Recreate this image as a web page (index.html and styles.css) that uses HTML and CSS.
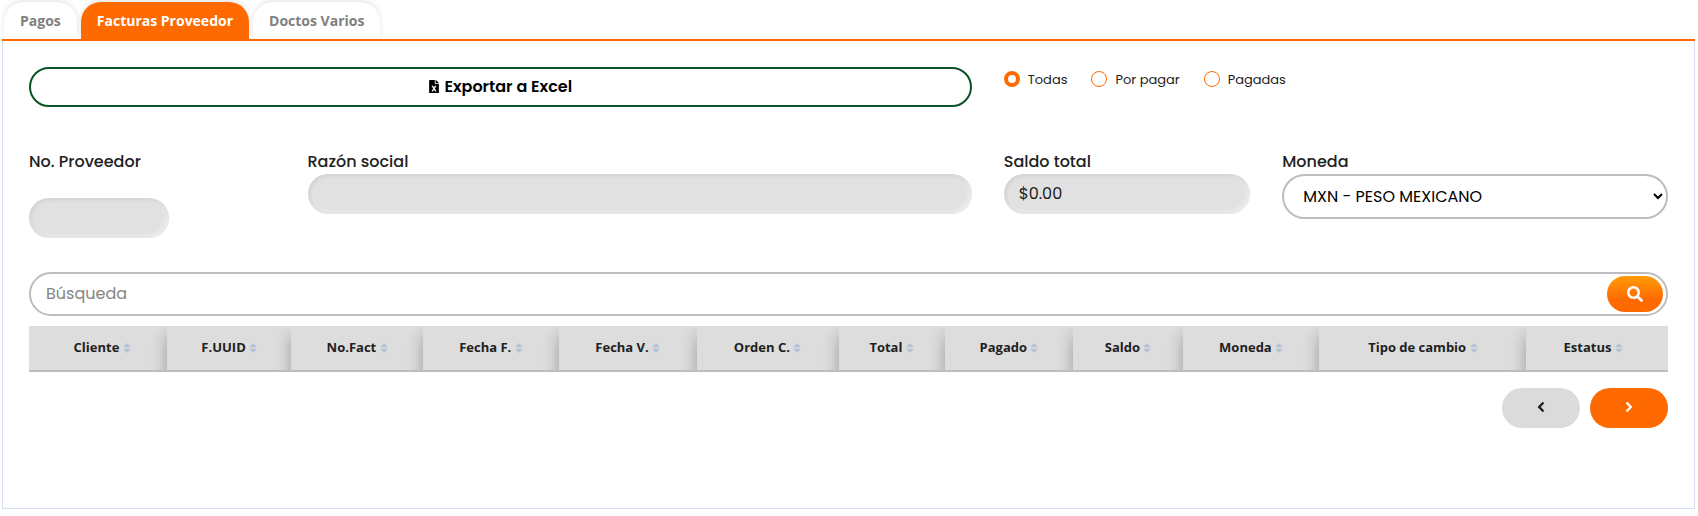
FILE: index.html
```html
<!DOCTYPE html>
<html lang="es">
<head>
    <meta charset="UTF-8">
    <meta name="viewport" content="width=device-width, initial-scale=1.0">
    <title>Facturas Proveedor</title>
    <link rel="stylesheet" href="styles.css">
</head>
<body>
    <svg class="sprite" aria-hidden="true">
        <symbol id="sort" viewBox="0 0 8 10">
            <path d="M4 0l3.800 4H.2zM4 10L.2 6h7.600z"/>
            <path d="M1 4h6v2H1z" opacity=".25"/>
        </symbol>
    </svg>
    <nav class="tabs">
        <a href="#pagos" class="tab">Pagos</a>
        <a href="#facturas" class="tab active">Facturas Proveedor</a>
        <a href="#doctos" class="tab">Doctos Varios</a>
    </nav>
    <main class="panel" id="facturas">
        <div class="row">
            <button type="button" class="btn-excel">
                <svg width="10" height="13" viewBox="0 0 384 512"><path fill="currentColor" d="M224 136V0H24C10.700 0 0 10.700 0 24v464c0 13.300 10.700 24 24 24h336c13.300 0 24-10.700 24-24V160H248c-13.200 0-24-10.800-24-24zm60.100 106.500L224 336l60.100 93.500c5.100 8-.6 18.500-10.100 18.500h-34.900c-4.400 0-8.500-2.400-10.600-6.300C208.900 405.500 192 373 192 373c-6.400 14.800-10 20-36.600 68.800-2.100 3.900-6.100 6.300-10.500 6.300H110c-9.500 0-15.200-10.500-10.100-18.500l60.300-93.500-60.300-93.500c-5.200-8 .6-18.500 10.100-18.500h34.800c4.400 0 8.500 2.400 10.600 6.300 26.100 48.800 20 33.600 36.600 68.500 0 0 6.100-11.700 36.600-68.500 2.100-3.900 6.200-6.300 10.600-6.300H274c9.500-.1 15.200 10.400 10.100 18.400zM384 121.900v6.100H256V0h6.100c6.400 0 12.500 2.500 17 7l97.900 98c4.500 4.500 7 10.600 7 16.900z"/></svg>
                Exportar a Excel
            </button>
            <div class="radios">
                <label><input type="radio" name="estado" checked> Todas</label>
                <label><input type="radio" name="estado"> Por pagar</label>
                <label><input type="radio" name="estado"> Pagadas</label>
            </div>
        </div>
        <div class="row fields">
            <div class="field proveedor">
                <label for="proveedor">No. Proveedor</label>
                <input type="text" id="proveedor" readonly>
            </div>
            <div class="field razon">
                <label for="razon">Razón social</label>
                <input type="text" id="razon" readonly>
            </div>
            <div class="field saldo">
                <label for="saldo">Saldo total</label>
                <input type="text" id="saldo" value="$0.00" readonly>
            </div>
            <div class="field moneda">
                <label for="moneda">Moneda</label>
                <select id="moneda">
                    <option>MXN - PESO MEXICANO</option>
                </select>
            </div>
        </div>
        <form class="search">
            <input type="text" placeholder="Búsqueda" aria-label="Búsqueda">
            <button type="button" aria-label="Buscar">
                <svg width="16" height="16" viewBox="0 0 512 512"><path fill="currentColor" d="M505 442.700L405.300 343c-4.500-4.500-10.600-7-17-7H372c27.600-35.300 44-79.700 44-128C416 93.100 322.900 0 208 0S0 93.100 0 208s93.100 208 208 208c48.300 0 92.700-16.400 128-44v16.300c0 6.400 2.500 12.500 7 17l99.700 99.700c9.400 9.400 24.600 9.400 33.900 0l28.300-28.300c9.400-9.400 9.400-24.600.1-34zM208 336c-70.700 0-128-57.200-128-128 0-70.700 57.200-128 128-128 70.700 0 128 57.200 128 128 0 70.700-57.200 128-128 128z"/></svg>
            </button>
        </form>
        <div class="table-wrap">
            <table>
                <thead>
                    <tr>
                        <th>Cliente <svg><use href="#sort"/></svg></th>
                        <th>F.UUID <svg><use href="#sort"/></svg></th>
                        <th>No.Fact <svg><use href="#sort"/></svg></th>
                        <th>Fecha F. <svg><use href="#sort"/></svg></th>
                        <th>Fecha V. <svg><use href="#sort"/></svg></th>
                        <th>Orden C. <svg><use href="#sort"/></svg></th>
                        <th>Total <svg><use href="#sort"/></svg></th>
                        <th>Pagado <svg><use href="#sort"/></svg></th>
                        <th>Saldo <svg><use href="#sort"/></svg></th>
                        <th>Moneda <svg><use href="#sort"/></svg></th>
                        <th>Tipo de cambio <svg><use href="#sort"/></svg></th>
                        <th>Estatus <svg><use href="#sort"/></svg></th>
                    </tr>
                </thead>
            </table>
        </div>
        <div class="pager">
            <button type="button" class="prev" aria-label="Anterior">
                <svg width="8" height="12" viewBox="0 0 8 12"><path d="M6.500 1.500L2.200 6l4.300 4.500"/></svg>
            </button>
            <button type="button" class="next" aria-label="Siguiente">
                <svg width="8" height="12" viewBox="0 0 8 12"><path d="M1.500 1.500L5.800 6l-4.300 4.500"/></svg>
            </button>
        </div>
    </main>
</body>
</html>
```
FILE: styles.css
```css
* {
    box-sizing: border-box;
}
body {
    margin: 0;
    padding: 2px 3px 8px 2px;
    background-color: #fff;
    color: #212121;
    font-family: Poppins, Inter, sans-serif;
    font-size: 16px;
    line-height: 24px;
}
button,
input,
select {
    font: inherit;
    margin: 0;
}
.sprite {
    display: none;
}
.tabs {
    display: flex;
    gap: 4px;
    padding-left: 2px;
    border-bottom: 2px solid #ff6a00;
}
.tab {
    height: 37px;
    padding: 0 16px;
    border-radius: 20px 20px 0 0;
    box-shadow: 0 -2px 5px rgba(0, 0, 0, 0.1);
    color: #808080;
    font: bold 14px/37px "Open Sans", sans-serif;
    text-decoration: none;
}
.tab.active {
    background-color: #ff6a00;
    color: #fff;
}
.panel {
    min-height: 468px;
    padding: 26px;
    border: 1px solid #d5deed;
    border-top: none;
}
.row {
    display: grid;
    grid-template-columns: repeat(12, 1fr);
    column-gap: 32px;
}
.btn-excel {
    grid-column: span 7;
    height: 40px;
    border: 2px solid #0b5226;
    border-radius: 20px;
    background-color: #fff;
    color: #000;
    font-weight: 600;
    cursor: pointer;
}
.btn-excel svg {
    margin-right: 2px;
    vertical-align: -1px;
}
.radios {
    grid-column: span 5;
    display: flex;
    gap: 24px;
    font-size: 13px;
}
.radios label {
    display: flex;
    align-items: center;
    gap: 8px;
    height: 26px;
}
.radios input {
    appearance: none;
    width: 16px;
    height: 16px;
    margin-bottom: 2px;
    border: 1px solid #ff6a00;
    border-radius: 50%;
}
.radios input:checked {
    border-width: 4px;
}
.fields {
    margin-top: 42px;
}
.field {
    display: flex;
    flex-direction: column;
}
.field label {
    height: 25px;
    padding-top: 1px;
    font-weight: 500;
}
.field input {
    width: 100%;
    height: 40px;
    padding: 0 15px 2px;
    border: none;
    border-radius: 20px;
    background-color: #e1e1e1;
    color: #212121;
    box-shadow: inset 1px 1px 5px rgba(0, 0, 0, 0.1), inset -2px -2px 5px rgba(255, 255, 255, 0.6);
}
.field select {
    height: 45px;
    padding: 0 15px;
    border: 2px solid #bdbdbd;
    border-radius: 23px;
    background-color: #fff;
    color: #000;
}
.proveedor,
.saldo {
    grid-column: span 2;
}
.proveedor input {
    width: 140px;
    margin-top: 24px;
}
.razon {
    grid-column: span 5;
}
.moneda {
    grid-column: span 3;
}
.search {
    display: flex;
    align-items: center;
    height: 44px;
    margin-top: 34px;
    padding-right: 3px;
    border: 2px solid #bdbdbd;
    border-radius: 22px;
}
.search input {
    flex: 1;
    padding: 0 15px;
    border: none;
    outline: none;
    background: none;
}
.search input::placeholder {
    color: #858585;
}
.search button {
    display: flex;
    align-items: center;
    justify-content: center;
    width: 56px;
    height: 36px;
    border: none;
    border-radius: 18px;
    background: linear-gradient(#ff9d0a, #ff6a00 65%);
    color: #fff;
    cursor: pointer;
}
.table-wrap {
    margin-top: 10px;
    overflow: hidden;
    border-bottom: 2px solid #bdbdbd;
}
table {
    width: 100%;
    border-spacing: 0;
    font: bold 13px/20px "Open Sans", sans-serif;
}
th {
    height: 44px;
    padding: 0 12px 2px;
    background-color: #ddd;
    box-shadow: 0 10px 16px rgba(0, 0, 0, 0.3);
    white-space: nowrap;
}
th:first-child {
    padding-left: 20px;
}
th:last-child {
    padding-right: 20px;
}
th svg {
    width: 8px;
    height: 10px;
    fill: #b5c2d6;
    vertical-align: -1px;
}
.pager {
    display: flex;
    justify-content: flex-end;
    gap: 10px;
    margin-top: 16px;
}
.pager button {
    width: 78px;
    height: 40px;
    border: none;
    border-radius: 20px;
    background-color: #dbdbdb;
    color: #212121;
    cursor: pointer;
}
.pager .next {
    background-color: #ff6a00;
    color: #fff;
}
.pager path {
    fill: none;
    stroke: currentColor;
    stroke-width: 2.4;
}
```
